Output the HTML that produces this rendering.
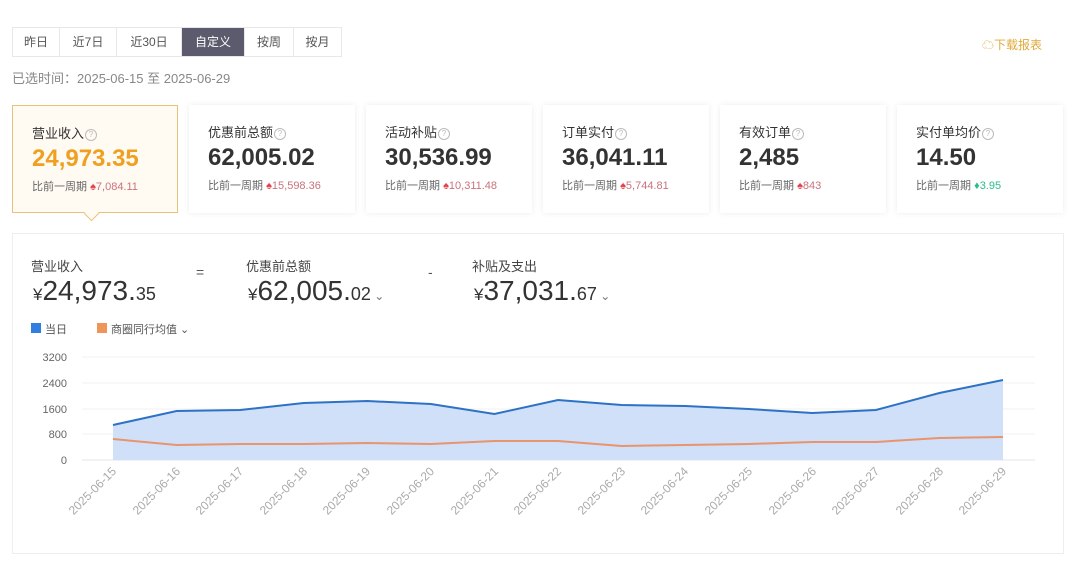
<!DOCTYPE html>
<html><head><meta charset="utf-8"><style>
body{margin:0;width:1080px;height:578px;background:#fff;font-family:"Liberation Sans","Noto Sans CJK SC",sans-serif;position:relative;overflow:hidden;color:#333}
.a{position:absolute;white-space:nowrap}
.tabs{position:absolute;left:12px;top:27px;height:28px;display:flex;border:1px solid #e8e8e8}
.tabs div{font-size:12px;color:#555;line-height:28px;text-align:center;border-right:1px solid #e8e8e8}
.tabs div.on{background:#5b5b6d;color:#fff}
.card{position:absolute;top:105px;width:166px;height:108px;background:#fff;box-shadow:0 0 6px rgba(0,0,0,.08);box-sizing:border-box}
.card .t{position:absolute;left:19px;top:17px;font-size:13px;color:#333}
.card .v{position:absolute;left:19px;top:39px;font-size:24px;font-weight:bold;color:#333}
.card .c{position:absolute;left:19px;top:72px;font-size:11px;color:#666}
.q{display:inline-block;width:10px;height:10px;border:1px solid #bbb;border-radius:50%;font-size:8px;line-height:10px;text-align:center;color:#bbb;vertical-align:1px;margin-left:1px}
.up{color:#e2414d}.dn{color:#2bbd8b}
.num{color:#c9737d}
.big{font-size:28px;color:#333}
</style></head><body>
<div class="tabs">
<div style="width:46px">昨日</div><div style="width:56px">近7日</div><div style="width:64px">近30日</div><div class="on" style="width:62px">自定义</div><div style="width:48px">按周</div><div style="width:47px;border:0">按月</div>
</div>
<div class="a" style="left:982px;top:36px;font-size:12px;color:#e0a93a">☁下载报表</div>
<div class="a" style="left:12px;top:68px;font-size:13px;color:#888">已选时间：2025-06-15 至 2025-06-29</div>

<div class="card" style="left:12px;background:#fffaf2;border:1px solid #e9c27a;box-shadow:none"><div class="t">营业收入<span class="q">?</span></div><div class="v" style="color:#f0a020">24,973.35</div><div class="c">比前一周期 <span class="up">♠</span><span class="num">7,084.11</span></div></div>
<div class="a" style="left:86px;top:208px;width:10px;height:10px;background:#fffaf2;border-right:1px solid #e9c27a;border-bottom:1px solid #e9c27a;transform:rotate(45deg)"></div>
<div class="card" style="left:189px"><div class="t">优惠前总额<span class="q">?</span></div><div class="v">62,005.02</div><div class="c">比前一周期 <span class="up">♠</span><span class="num">15,598.36</span></div></div>
<div class="card" style="left:366px"><div class="t">活动补贴<span class="q">?</span></div><div class="v">30,536.99</div><div class="c">比前一周期 <span class="up">♠</span><span class="num">10,311.48</span></div></div>
<div class="card" style="left:543px"><div class="t">订单实付<span class="q">?</span></div><div class="v">36,041.11</div><div class="c">比前一周期 <span class="up">♠</span><span class="num">5,744.81</span></div></div>
<div class="card" style="left:720px"><div class="t">有效订单<span class="q">?</span></div><div class="v">2,485</div><div class="c">比前一周期 <span class="up">♠</span><span class="num">843</span></div></div>
<div class="card" style="left:897px"><div class="t">实付单均价<span class="q">?</span></div><div class="v">14.50</div><div class="c">比前一周期 <span class="dn">♦</span><span style="color:#2bbd8b">3.95</span></div></div>

<div class="a" style="left:12px;top:233px;width:1052px;height:321px;border:1px solid #eee;box-sizing:border-box"></div>
<div class="a" style="left:31px;top:256px;font-size:13px;color:#444">营业收入</div>
<div class="a big" style="left:33px;top:275px"><span style="font-size:17px">¥</span>24,973.<span style="font-size:18px">35</span></div>
<div class="a" style="left:196px;top:264px;font-size:14px;color:#555">=</div>
<div class="a" style="left:246px;top:256px;font-size:13px;color:#444">优惠前总额</div>
<div class="a big" style="left:248px;top:275px"><span style="font-size:17px">¥</span>62,005.<span style="font-size:18px">02</span><span style="font-size:12px;color:#777"> ⌄</span></div>
<div class="a" style="left:428px;top:264px;font-size:14px;color:#555">-</div>
<div class="a" style="left:472px;top:256px;font-size:13px;color:#444">补贴及支出</div>
<div class="a big" style="left:474px;top:275px"><span style="font-size:17px">¥</span>37,031.<span style="font-size:18px">67</span><span style="font-size:12px;color:#777"> ⌄</span></div>

<div class="a" style="left:31px;top:323px;width:10px;height:10px;background:#2f7ee0"></div>
<div class="a" style="left:45px;top:321px;font-size:11px;color:#555">当日</div>
<div class="a" style="left:97px;top:323px;width:10px;height:10px;background:#f0955a"></div>
<div class="a" style="left:111px;top:321px;font-size:11px;color:#555">商圈同行均值 ⌄</div>

<svg class="a" style="left:0;top:0" width="1080" height="578">
<g stroke="#f0f0f0" stroke-width="1">
<line x1="82" y1="357" x2="1035" y2="357"/><line x1="82" y1="383" x2="1035" y2="383"/><line x1="82" y1="409" x2="1035" y2="409"/><line x1="82" y1="434" x2="1035" y2="434"/><line x1="82" y1="460" x2="1035" y2="460" stroke="#e6e6e6"/>
</g>
<g font-size="11" fill="#666" text-anchor="end" font-family="Liberation Sans">
<text x="67" y="361">3200</text><text x="67" y="387">2400</text><text x="67" y="413">1600</text><text x="67" y="438">800</text><text x="67" y="464">0</text>
</g>
<path d="M113,425 L176.6,411 L240.1,410 L303.7,403 L367.3,401 L430.9,404 L494.4,414 L558,400 L621.6,405 L685.1,406 L748.7,409 L812.3,413 L875.9,410 L939.4,393 L1003,380 L1003,460 L113,460Z" fill="#cfe0f8"/>
<path d="M113,425 L176.6,411 L240.1,410 L303.7,403 L367.3,401 L430.9,404 L494.4,414 L558,400 L621.6,405 L685.1,406 L748.7,409 L812.3,413 L875.9,410 L939.4,393 L1003,380" fill="none" stroke="#2d72c4" stroke-width="2"/>
<path d="M113,439 L176.6,445 L240.1,444 L303.7,444 L367.3,443 L430.9,444 L494.4,441 L558,441 L621.6,446 L685.1,445 L748.7,444 L812.3,442 L875.9,442 L939.4,438 L1003,437" fill="none" stroke="#e8946c" stroke-width="2"/>
<g font-size="12" fill="#aaa" font-family="Liberation Sans" text-anchor="end">
<text transform="translate(117,472) rotate(-45)">2025-06-15</text>
<text transform="translate(181,472) rotate(-45)">2025-06-16</text>
<text transform="translate(244,472) rotate(-45)">2025-06-17</text>
<text transform="translate(308,472) rotate(-45)">2025-06-18</text>
<text transform="translate(371,472) rotate(-45)">2025-06-19</text>
<text transform="translate(435,472) rotate(-45)">2025-06-20</text>
<text transform="translate(499,472) rotate(-45)">2025-06-21</text>
<text transform="translate(562,472) rotate(-45)">2025-06-22</text>
<text transform="translate(626,472) rotate(-45)">2025-06-23</text>
<text transform="translate(689,472) rotate(-45)">2025-06-24</text>
<text transform="translate(753,472) rotate(-45)">2025-06-25</text>
<text transform="translate(817,472) rotate(-45)">2025-06-26</text>
<text transform="translate(880,472) rotate(-45)">2025-06-27</text>
<text transform="translate(944,472) rotate(-45)">2025-06-28</text>
<text transform="translate(1007,472) rotate(-45)">2025-06-29</text>
</g>
</svg>
</body></html>
